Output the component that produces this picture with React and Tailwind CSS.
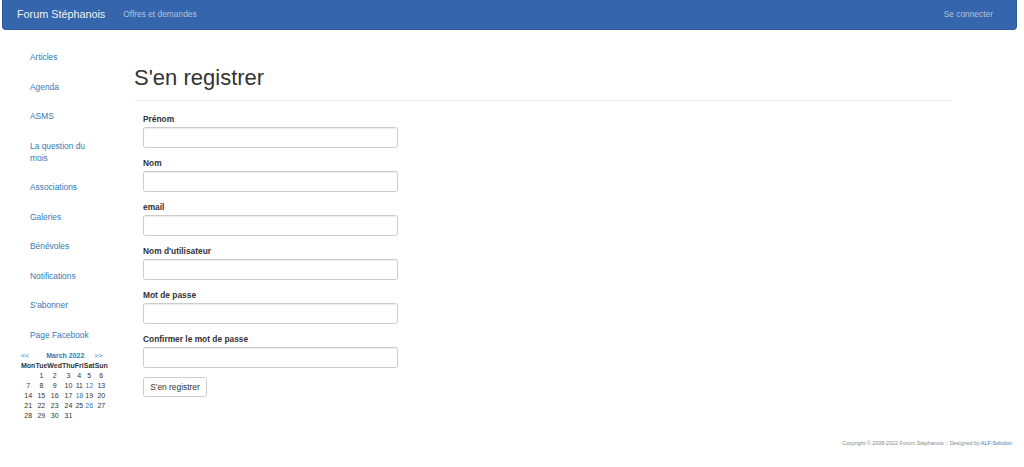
const NAV = ['Articles', 'Agenda', 'ASMS', 'La question du mois', 'Associations', 'Galeries', 'Bénévoles', 'Notifications', "S'abonner", 'Page Facebook']

const FIELDS = ['Prénom', 'Nom', 'email', "Nom d'utilisateur", 'Mot de passe', 'Confirmer le mot de passe']

const WEEKS = [
  [null, 1, 2, 3, 4, 5, 6],
  [7, 8, 9, 10, 11, 12, 13],
  [14, 15, 16, 17, 18, 19, 20],
  [21, 22, 23, 24, 25, 26, 27],
  [28, 29, 30, 31, null, null, null],
]
const LINKED = [12, 18, 26]

function Calendar() {
  return (
    <div className="mt-[2px] w-[87px] text-[7px] leading-[10px] text-[#333]">
      <div className="flex items-center h-[10px]">
        <span className="text-[#337ab7]">&lt;&lt;</span>
        <span className="ml-[17px] font-bold text-[#337ab7]">March 2022</span>
        <span className="ml-[10px] text-[#337ab7]">&gt;&gt;</span>
      </div>
      <table className="border-collapse">
        <thead>
          <tr>
            {['Mon', 'Tue', 'Wed', 'Thu', 'Fri', 'Sat', 'Sun'].map((d) => (
              <th key={d} className="p-0 font-bold text-center">{d}</th>
            ))}
          </tr>
        </thead>
        <tbody>
          {WEEKS.map((w, i) => (
            <tr key={i}>
              {w.map((d, j) => (
                <td key={j} className={`p-0 text-center ${LINKED.includes(d) ? 'text-[#337ab7]' : ''}`}>{d}</td>
              ))}
            </tr>
          ))}
        </tbody>
      </table>
    </div>
  )
}

export default function App() {
  return (
    <div className="min-h-[467px] flex flex-col bg-white font-['Liberation_Sans',Arial,sans-serif] text-[#333]">
      {/* Barre de navigation */}
      <nav className="ml-[2px] w-[1015px] h-[30px] bg-[#3465ad] border border-t-0 border-[#2d5a9b] rounded-b-[4px] flex items-center">
        <span className="ml-[14px] text-[10.8px] text-[#f2f2f2]">Forum Stéphanois</span>
        <span className="ml-[18px] text-[8.4px] text-[#b4c2da]">Offres et demandes</span>
        <span className="ml-auto mr-[23px] text-[8.4px] text-[#b4c2da]">Se connecter</span>
      </nav>

      <div className="flex">
        {/* Menu latéral */}
        <aside className="w-[134px] pl-[21px] pt-[12.25px] shrink-0">
          <ul>
            {NAV.map((item) => (
              <li key={item} className="pl-[9px] py-[8.75px] w-[70px] text-[8.4px] leading-[12px] text-[#337ab7]">
                <span className={item === 'La question du mois' ? 'block w-[58px]' : ''}>{item}</span>
              </li>
            ))}
          </ul>
          <Calendar />
        </aside>

        {/* Contenu */}
        <main className="w-[818px] pt-[35px]">
          <h1 className="text-[22px] leading-[26px] font-normal text-[#333]">S'en registrer</h1>
          <div className="mt-[9px] border-t border-[#eee]" />
          <form className="pl-[9px] pt-[12px]">
            {FIELDS.map((f) => (
              <div key={f} className="mb-[9px]">
                <label className="block text-[8.4px] leading-[12px] font-bold text-[#333] mb-[2px]">{f}</label>
                <input className="block w-[255px] h-[21px] border border-[#ccc] rounded-[2.5px] shadow-[inset_0_1px_1px_rgba(0,0,0,0.075)] bg-white" />
              </div>
            ))}
            <button type="button" className="block w-[64px] h-[20px] border border-[#ccc] rounded-[2.5px] bg-white text-[8.4px] text-[#333]">S'en registrer</button>
          </form>
        </main>
      </div>

      {/* Pied de page */}
      <footer className="mt-auto pb-[20px] pr-[12px] text-right text-[5.4px] leading-[8px] text-[#888]">
        Copyright © 2008-2022 Forum Stéphanois :: Designed by <span className="text-[#337ab7]">ALF-Solution</span>
      </footer>
    </div>
  )
}
